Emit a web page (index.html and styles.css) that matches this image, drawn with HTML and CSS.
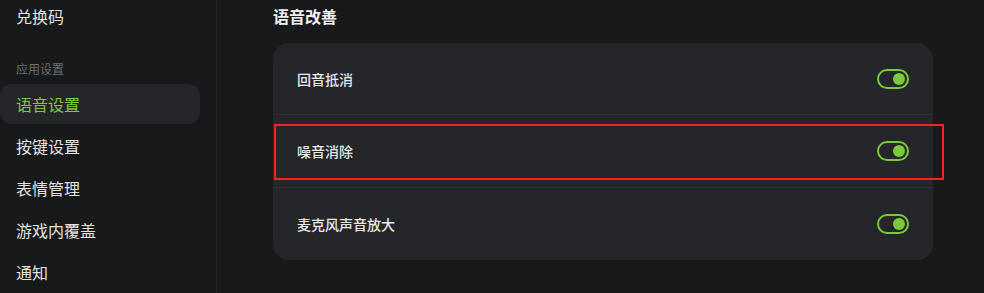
FILE: index.html
```html
<!DOCTYPE html>
<html lang="zh-CN">
<head>
<meta charset="utf-8">
<title>语音设置</title>
<link rel="stylesheet" href="styles.css">
</head>
<body>
<div class="app">
  <nav class="sidebar">
    <div class="nav-list">
      <div class="nav-item">兑换码</div>
      <div class="nav-group">应用设置</div>
      <div class="nav-item active">语音设置</div>
      <div class="nav-item">按键设置</div>
      <div class="nav-item">表情管理</div>
      <div class="nav-item">游戏内覆盖</div>
      <div class="nav-item">通知</div>
    </div>
  </nav>
  <main class="content">
    <h2 class="section-title">语音改善</h2>
    <div class="card">
      <div class="row">
        <span class="row-label">回音抵消</span>
        <span class="toggle on"><span class="knob"></span></span>
      </div>
      <div class="row">
        <span class="row-label">噪音消除</span>
        <span class="toggle on"><span class="knob"></span></span>
      </div>
      <div class="row">
        <span class="row-label">麦克风声音放大</span>
        <span class="toggle on"><span class="knob"></span></span>
      </div>
      <div class="highlight"></div>
    </div>
  </main>
</div>
</body>
</html>
```
FILE: styles.css
```css
* { box-sizing: border-box; }
html, body {
  margin: 0;
  padding: 0;
  background: #18191b;
  width: 984px;
  height: 293px;
  overflow: hidden;
  font-family: "Noto Sans CJK SC", "Noto Sans", sans-serif;
}
.app {
  display: flex;
  height: 293px;
}
.sidebar {
  width: 217px;
  flex: none;
  border-right: 1px solid #232428;
  padding: 0 16px 0 0;
}
.nav-list {
  display: flex;
  flex-direction: column;
  margin-top: -4px;
}
.nav-item {
  height: 40px;
  margin-bottom: 2px;
  padding-left: 16px;
  display: flex;
  align-items: center;
  font-size: 16px;
  color: #e2e2e2;
  border-radius: 12px;
}
.nav-item.active {
  background: #25262a;
  color: #7acb3c;
}
.nav-group {
  height: 24px;
  margin: 18px 0 4px;
  padding-left: 16px;
  display: flex;
  align-items: center;
  font-size: 12px;
  color: #6c6d70;
}
.content {
  flex: 1;
  padding-left: 56px;
  padding-right: 51px;
}
.section-title {
  margin: 0;
  height: 32px;
  display: flex;
  align-items: center;
  font-size: 16px;
  font-weight: 700;
  color: #f0f0f0;
}
.card {
  position: relative;
  margin-top: 11px;
  background: #25262a;
  border-radius: 16px;
}
.row {
  height: 72px;
  display: flex;
  align-items: center;
  justify-content: space-between;
  padding: 0 24px;
}
.row + .row {
  border-top: 1px solid #2f3035;
  height: 73px;
}
.row:first-child { height: 71px; }
.row-label {
  font-size: 14px;
  font-weight: 500;
  color: #e8e8e8;
}
.toggle {
  width: 32px;
  height: 20px;
  border: 2px solid #7acb3c;
  border-radius: 10px;
  display: flex;
  align-items: center;
  justify-content: flex-end;
  padding-right: 2px;
}
.knob {
  width: 12px;
  height: 12px;
  border-radius: 50%;
  background: #7acb3c;
}
.highlight {
  position: absolute;
  left: 1px;
  top: 81px;
  width: 670px;
  height: 56px;
  border: 2px solid #ff2121;
}
```
